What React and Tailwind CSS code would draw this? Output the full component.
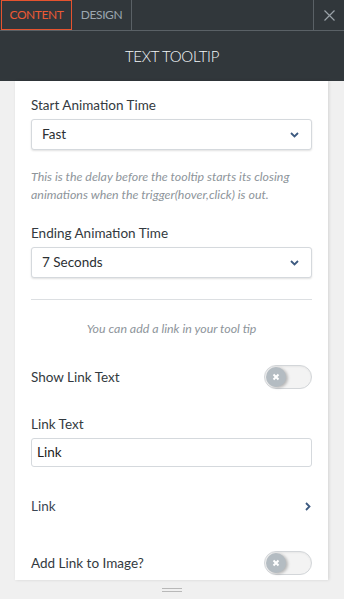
import React from "react";

const Chevron = () => (
  <svg width="9" height="6" viewBox="0 0 9 6" className="text-[#3d5a80]">
    <path d="M1 1l3.5 3.5L8 1" fill="none" stroke="currentColor" strokeWidth="1.8" />
  </svg>
);

const Toggle = () => (
  <div className="w-[48px] h-[24px] rounded-full border border-[#d3d6d9] bg-[#f3f3f3] flex items-center pl-[1px] shadow-[inset_0_1px_2px_rgba(0,0,0,0.05)]">
    <div className="w-[20px] h-[20px] rounded-full bg-[#b4bcc2] flex items-center justify-center shadow-[2px_1px_3px_rgba(0,0,0,0.25)]">
      <svg width="8" height="8" viewBox="0 0 8 8">
        <path d="M1.5 1.5l5 5M6.5 1.5l-5 5" stroke="white" strokeWidth="2" />
      </svg>
    </div>
  </div>
);

const Select = ({ value }) => (
  <div className="h-[31px] rounded-[3px] border border-[#d5d9dd] bg-white shadow-[0_1px_2px_rgba(0,0,0,0.12)] flex items-center justify-between pl-[10px] pr-[12px] text-[13.5px] text-[#2b2f33]">
    <span>{value}</span>
    <Chevron />
  </div>
);

export default function App() {
  return (
    <div
      className="w-[344px] h-[599px] bg-[#f0f0f0] flex flex-col overflow-hidden"
      style={{ fontFamily: "Lato, 'Open Sans', sans-serif" }}
    >
      <div className="h-[31px] bg-[#31373b] flex border-b border-[#5a6166] shrink-0">
        <div className="w-[71px] ml-[1px] border border-[#e5532f] text-[#ec5a35] text-[12px] tracking-[-0.4px] flex items-center justify-center">
          CONTENT
        </div>
        <div className="w-[60px] border-r border-[#5a6166] text-[#9ba6b0] text-[12px] tracking-[-0.4px] flex items-center justify-center">
          DESIGN
        </div>
        <div className="flex-1" />
        <div className="w-[31px] border-l border-[#5a6166] flex items-center justify-center">
          <svg width="11" height="11" viewBox="0 0 11 11">
            <path d="M0.5 0.5l10 10M10.5 0.5l-10 10" stroke="#9aa2a8" strokeWidth="1.2" />
          </svg>
        </div>
      </div>
      <div className="h-[50px] bg-[#31373b] flex items-center justify-center text-[#f2f6f8] text-[15px] font-light tracking-[-0.3px] shrink-0">
        TEXT TOOLTIP
      </div>
      <div className="flex-1 flex flex-col">
        <div className="ml-[15px] w-[313px] h-[499px] bg-white shadow-[1px_0_3px_rgba(0,0,0,0.12)] px-[16px] pt-[15px] text-[13.5px] text-[#333a40] flex flex-col">
          <div className="leading-[18px]">Start Animation Time</div>
          <div className="mt-[5px]">
            <Select value="Fast" />
          </div>
          <div className="mt-[18px] italic text-[12.4px] leading-[18px] text-[#8e959b]">
            This is the delay before the tooltip starts its closing animations when the trigger(hover,click) is out.
          </div>
          <div className="mt-[20px] leading-[18px]">Ending Animation Time</div>
          <div className="mt-[5px]">
            <Select value="7 Seconds" />
          </div>
          <div className="mt-[21px] border-t border-[#dcdfe2]" />
          <div className="mt-[20px] italic text-[12.4px] leading-[18px] text-[#8e959b] text-center">
            You can add a link in your tool tip
          </div>
          <div className="mt-[27px] flex items-center justify-between">
            <span>Show Link Text</span>
            <Toggle />
          </div>
          <div className="mt-[26px] leading-[18px]">Link Text</div>
          <div className="mt-[5px] h-[29px] rounded-[3px] border border-[#d5d9dd] bg-white flex items-center px-[5px] text-[13.5px] text-[#222]">
            Link
          </div>
          <div className="mt-[30px] flex items-center justify-between leading-[18px]">
            <span className="text-[#3a4654]">Link</span>
            <svg width="6" height="9" viewBox="0 0 6 9" className="mr-[1px]">
              <path d="M1 1l3.5 3.5L1 8" fill="none" stroke="#3d5a80" strokeWidth="1.8" />
            </svg>
          </div>
          <div className="mt-[36px] flex items-center justify-between">
            <span>Add Link to Image?</span>
            <Toggle />
          </div>
        </div>
        <div className="flex-1 flex items-center justify-center">
          <div className="w-[20px] flex flex-col gap-[2px]">
            <div className="h-px bg-[#b8b8b8]" />
            <div className="h-px bg-[#b8b8b8]" />
          </div>
        </div>
      </div>
    </div>
  );
}
